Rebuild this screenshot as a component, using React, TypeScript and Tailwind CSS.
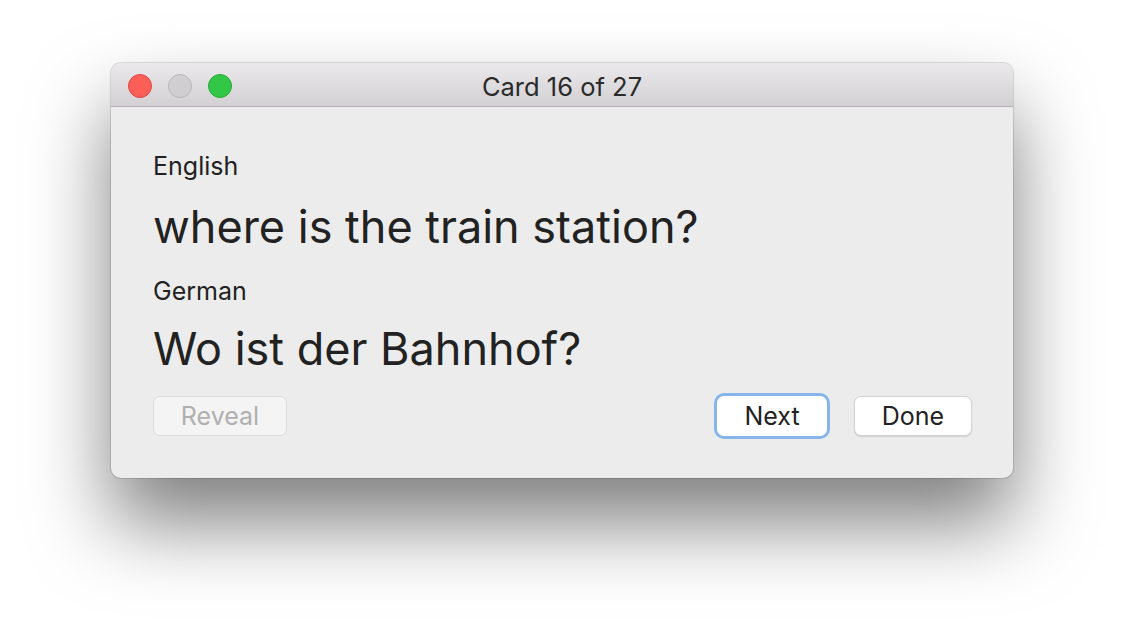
import React from "react";

export default function App() {
  const font = { fontFamily: "Inter, 'Noto Sans', sans-serif" };
  return (
    <div className="w-[1124px] h-[638px] bg-white overflow-hidden pt-[63px] pl-[111px]" style={font}>
      <div className="w-[902px] h-[415px] rounded-[10px] bg-[#ececec] overflow-hidden flex flex-col shadow-[0_45px_80px_rgba(0,0,0,0.5),0_0_0_1px_rgba(0,0,0,0.12)]">
        <div className="h-[44px] shrink-0 relative flex items-center justify-center bg-gradient-to-b from-[#ebe9eb] to-[#d2d0d2] border-b border-[#b3b1b3]">
          <div className="absolute left-[17px] top-[11px] flex gap-[16px]">
            <div className="w-[24px] h-[24px] rounded-full bg-[#fc5f57] border border-[#df4744]" />
            <div className="w-[24px] h-[24px] rounded-full bg-[#d0ced0] border border-[#b9b7b9]" />
            <div className="w-[24px] h-[24px] rounded-full bg-[#33c748] border border-[#27aa35]" />
          </div>
          <span className="text-[25.5px] text-[#2a2a2a] leading-none pt-[5px]">Card 16 of 27</span>
        </div>
        <div className="flex flex-col pl-[42px] pr-[42px] pt-[44px] text-[#222]">
          <div className="text-[25px] leading-[30px]">English</div>
          <div className="text-[45px] leading-[56px] mt-[18px]">where is the train station?</div>
          <div className="text-[25px] leading-[30px] mt-[21px]">German</div>
          <div className="text-[45px] leading-[56px] mt-[15px]">Wo ist der Bahnhof?</div>
          <div className="flex items-center mt-[19px]">
            <button className="w-[134px] h-[40px] rounded-[7px] bg-[#f4f4f4] border border-[#dcdcdc] text-[#b0b0b0] text-[25px] leading-none">Reveal</button>
            <div className="flex-1" />
            <button className="w-[110px] h-[40px] rounded-[7px] bg-white text-[#222] text-[25px] leading-none shadow-[0_0_0_3px_#86b5ec]">Next</button>
            <button className="w-[118px] h-[40px] ml-[27px] mr-[-1px] rounded-[7px] bg-white border border-[#d2d2d2] shadow-[0_1px_1px_rgba(0,0,0,0.12)] text-[#222] text-[25px] leading-none">Done</button>
          </div>
        </div>
      </div>
    </div>
  );
}
